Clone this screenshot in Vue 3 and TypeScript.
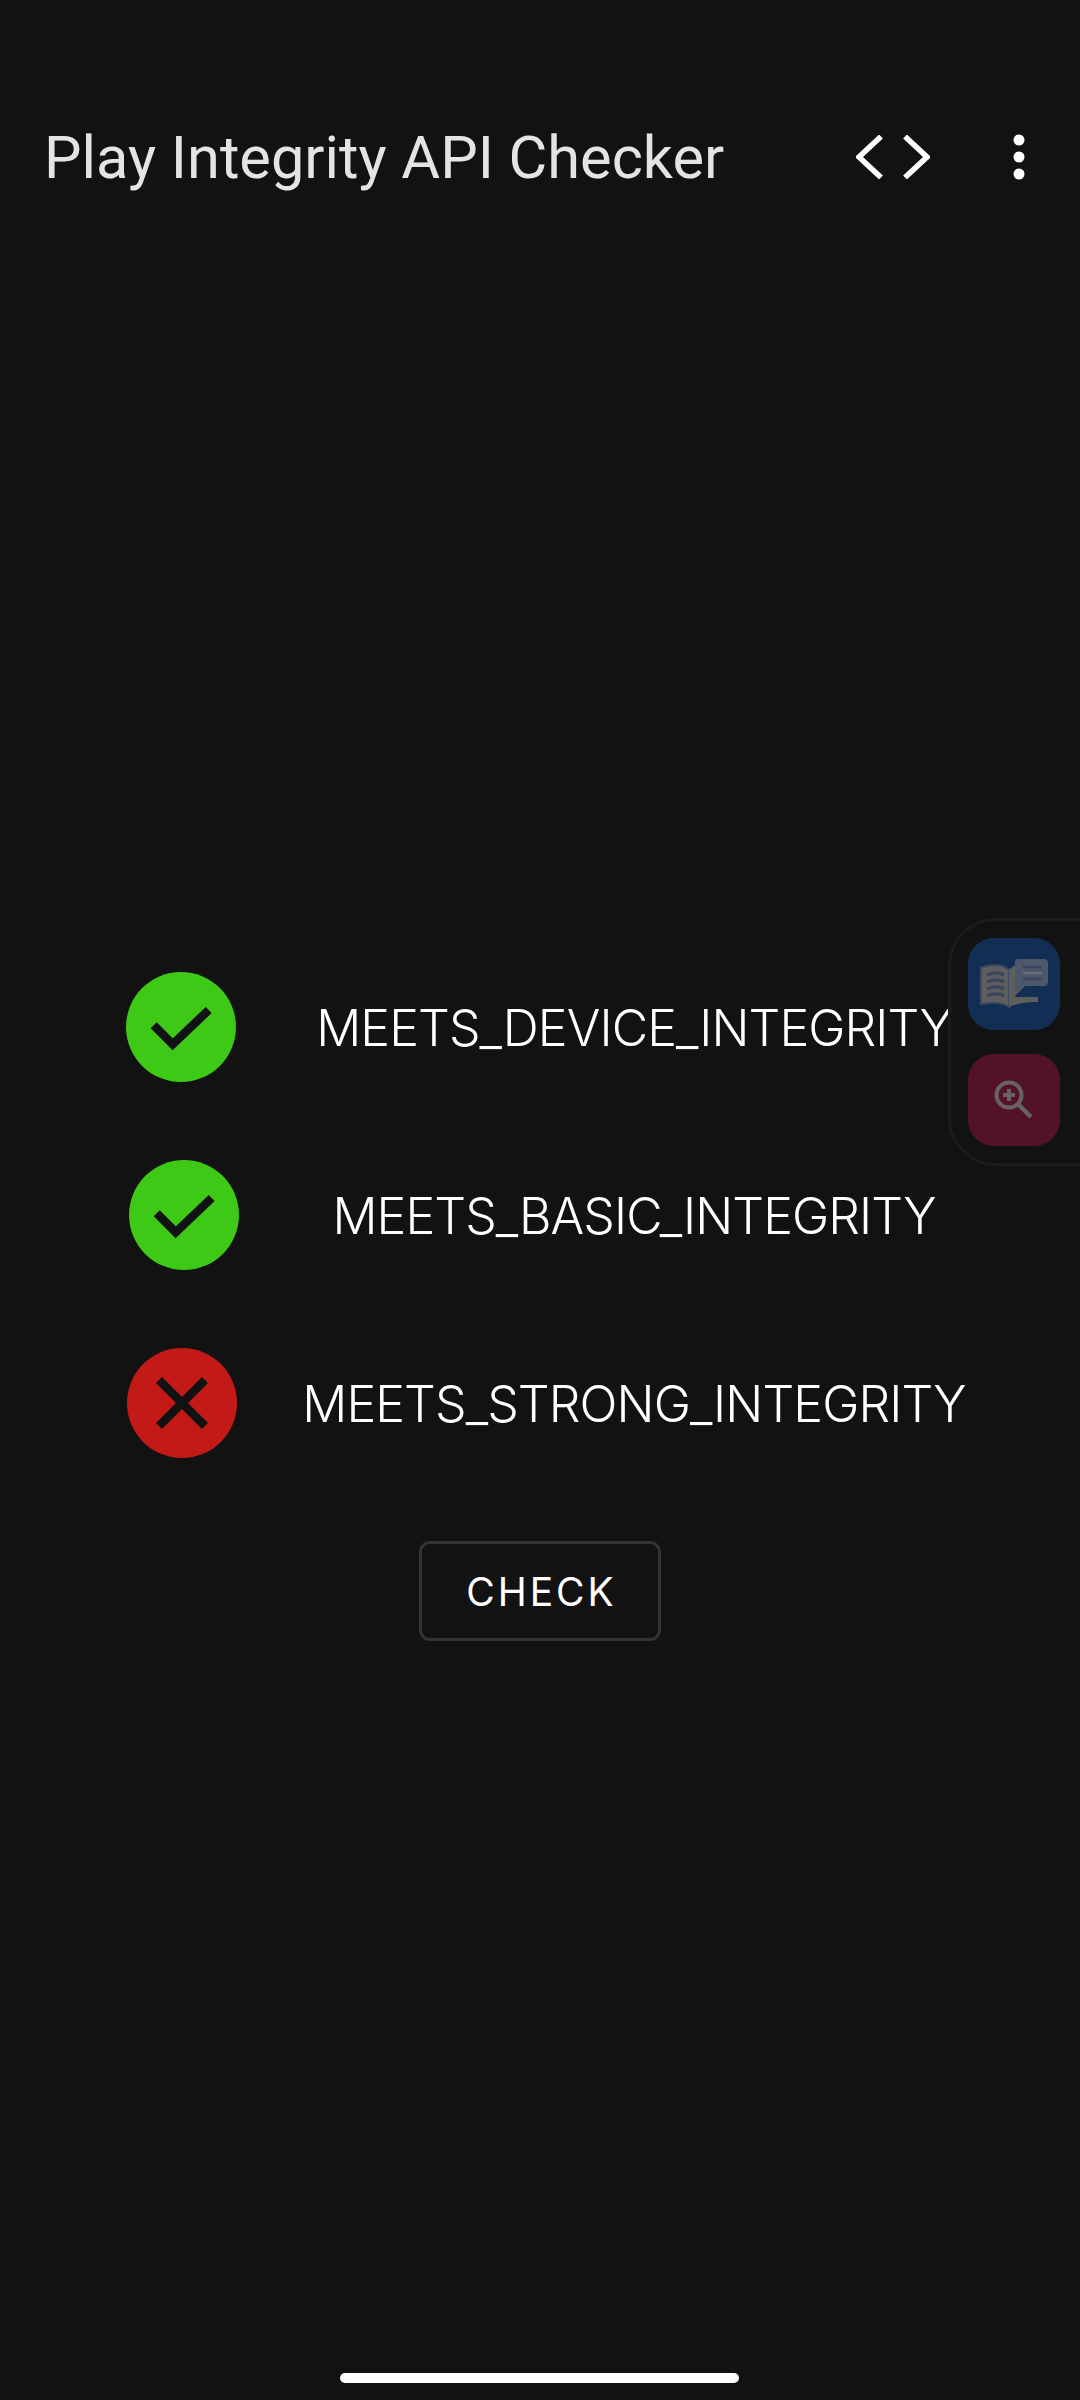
<script setup lang="ts">
type Check = {
  label: string;
  passed: boolean;
  iconLeft: number;
};

const checks: Check[] = [
  { label: "MEETS_DEVICE_INTEGRITY", passed: true, iconLeft: 126 },
  { label: "MEETS_BASIC_INTEGRITY", passed: true, iconLeft: 129 },
  { label: "MEETS_STRONG_INTEGRITY", passed: false, iconLeft: 127 }
];
</script>

<template>
  <div class="screen">
    <header class="toolbar">
      <h1 class="title">Play Integrity API Checker</h1>
      <svg class="code-icon" width="74" height="44" viewBox="0 0 74 44" fill="none" stroke="#fff" stroke-width="5.500">
        <path d="M25 1.500 3 22 25 42.500" />
        <path d="M49 1.500 71 22 49 42.500" />
      </svg>
      <svg class="more-icon" width="12" height="46" viewBox="0 0 12 46" fill="#fff">
        <circle cx="6" cy="6" r="5.500" />
        <circle cx="6" cy="23" r="5.500" />
        <circle cx="6" cy="40" r="5.500" />
      </svg>
    </header>

    <main class="content">
      <div class="row" v-for="check in checks" :key="check.label">
        <div class="icon-cell">
          <svg class="status" :style="{ marginLeft: check.iconLeft + 'px' }" width="110" height="110" viewBox="0 0 110 110" fill="none" stroke="#121212" stroke-width="8.500">
            <circle cx="55" cy="55" r="55" :fill="check.passed ? '#3dc915' : '#c41a17'" stroke="none" />
            <path v-if="check.passed" d="M27.700 53.300 46.700 72.300 82.700 38" />
            <path v-else d="M32 32 78 78M78 32 32 78" />
          </svg>
        </div>
        <span class="label">{{ check.label }}</span>
      </div>
      <button class="check-btn">CHECK</button>
    </main>

    <aside class="side-panel">
      <div class="side-btn blue">
        <svg width="68" height="50" viewBox="0 0 68 50" fill="none">
          <path d="M1 9C10 5 23 5 29 11V48C23 43 10 43 1 45Z" fill="#5e5e5e" stroke="#3f4b62" stroke-width="2" />
          <path d="M29 11C32 8 34 7 36 6V32L35 38H58V43C48 43 37 44 29 48Z" fill="#5e5e5e" />
          <path d="M7 16C14 13 19 13 24 16M7 23C14 20 19 20 24 23M7 30C14 27 19 27 24 30M7 37C14 34 19 34 24 37" stroke="#3a465c" stroke-width="3" />
          <path d="M38 0H64A4 4 0 0 1 68 4V23A4 4 0 0 1 64 27H45L35 37V3A3 3 0 0 1 38 0Z" fill="#4f576a" />
          <path d="M43 8H62M43 14H62M43 20H62" stroke="#38465f" stroke-width="2.500" />
          <path d="M43 14H62" stroke="#697080" stroke-width="2.500" />
        </svg>
      </div>
      <div class="side-btn maroon">
        <svg width="40" height="40" viewBox="0 0 40 40" fill="none" stroke="#656165">
          <circle cx="15" cy="15" r="12.500" stroke-width="4" />
          <path d="M24 24 37 37" stroke-width="4.500" />
          <path d="M15 9V21M9 15H21" stroke-width="4" />
        </svg>
      </div>
    </aside>

    <div class="home-bar"></div>
  </div>
</template>

<style scoped>
.screen {
  position: relative;
  width: 1080px;
  height: 2400px;
  background-color: #121212;
  overflow: hidden;
  display: flex;
  flex-direction: column;
}

.toolbar {
  display: flex;
  align-items: center;
  height: 80px;
  margin-top: 117px;
  padding: 0 55px 0 44px;
}

.title {
  flex: 1;
  margin: 0;
  padding-top: 2px;
  font-family: Roboto, sans-serif;
  font-size: 59.500px;
  font-weight: 400;
  color: #e4e4e4;
  white-space: nowrap;
}

.code-icon {
  margin-right: 83px;
}

.content {
  display: flex;
  flex-direction: column;
  margin-top: 775px;
}

.row {
  display: grid;
  grid-template-columns: 220px 828px;
  align-items: center;
  height: 110px;
  margin-bottom: 78px;
}

.icon-cell {
  display: flex;
}

.status {
  display: block;
  flex-shrink: 0;
}

.label {
  padding-top: 2px;
  font-family: Inter, sans-serif;
  font-size: 50px;
  font-weight: 300;
  letter-spacing: -0.900px;
  color: #fff;
  text-align: center;
  white-space: nowrap;
}

.check-btn {
  align-self: center;
  width: 242px;
  height: 100px;
  margin-top: 5px;
  padding: 0 0 0 3px;
  background: transparent;
  border: 3px solid #333;
  border-radius: 11px;
  color: #fff;
  font-family: Inter, sans-serif;
  font-size: 39px;
  font-weight: 400;
  letter-spacing: 3px;
}

.side-panel {
  position: absolute;
  top: 918px;
  left: 948px;
  width: 140px;
  height: 248px;
  box-sizing: border-box;
  padding: 17px 0 0 17px;
  border: 3px solid #1c1c1c;
  border-radius: 48px 0 0 48px;
  display: flex;
  flex-direction: column;
  gap: 24px;
}

.side-btn {
  width: 92px;
  height: 92px;
  border-radius: 26px;
  display: flex;
  align-items: center;
  justify-content: center;
}

.blue {
  background-color: #132e55;
}

.maroon {
  background-color: #54122a;
}

.home-bar {
  position: absolute;
  left: 340px;
  top: 2373px;
  width: 399px;
  height: 10px;
  border-radius: 5px;
  background-color: #fff;
}
</style>

<style>
body {
  background-color: #121212;
}
</style>
